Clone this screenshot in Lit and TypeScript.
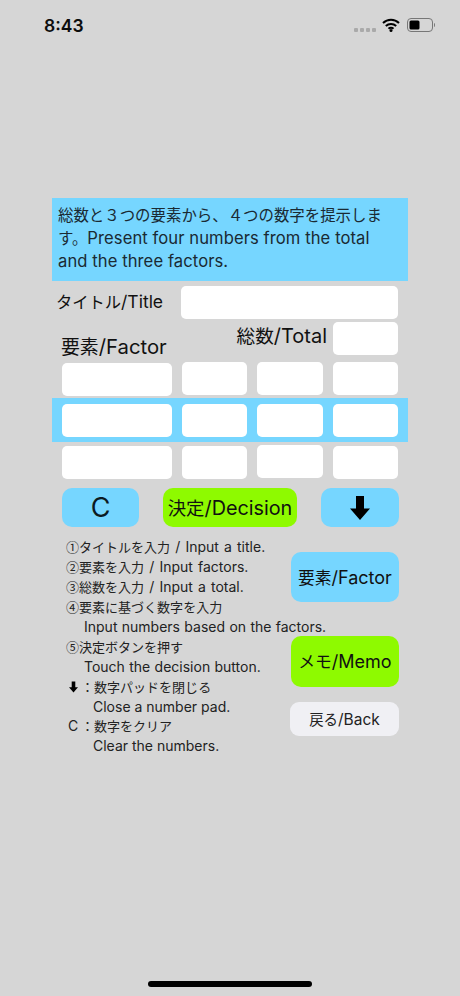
import { LitElement, html, css, svg } from "lit";
import { customElement } from "lit/decorators.js";

const arrow = svg`<path d="M6 0h8v12.500H20L10 24 0 12.500h6z" fill="#000"/>`;

/* Japanese runs sit a little smaller than the Latin ones, as in the reference. */
const t = (text: string) =>
  text
    .split(/([\u2460-\u2473\u3000-\u30ff\u4e00-\u9fff\uff00-\uffef]+)/)
    .filter(Boolean)
    .map((part) =>
      /^[\u2460-\u2473\u3000-\u30ff\u4e00-\u9fff\uff00-\uffef]/.test(part)
        ? html`<span class="j">${part}</span>`
        : part
    );

const jp = css`
  .j {
    font-family: "Noto Sans CJK JP", sans-serif;
    font-size: 0.93em;
    letter-spacing: 0;
    line-height: 1;
  }
`;

@customElement("app-root")
export class AppRoot extends LitElement {
  static styles = [
    jp,
    css`
      :host {
        display: block;
        width: 460px;
        height: 996px;
        background: #d6d6d6;
        color: #111;
        font-family: Inter, "Noto Sans CJK JP", sans-serif;
        position: relative;
        overflow: hidden;
      }
      .status {
        height: 50px;
        display: flex;
        align-items: center;
        padding: 0 25px 0 44px;
        box-sizing: border-box;
      }
      .time {
        font-size: 17.5px;
        font-weight: 600;
        flex: 1;
        color: #0c0c0c;
      }
      .dots {
        display: flex;
        gap: 2px;
        margin: 9px 6px 0 0;
      }
      .dots i {
        width: 4px;
        height: 4px;
        background: #aaa;
        border-radius: 1px;
      }
      .wifi {
        width: 18px;
        height: 14px;
        margin: 0 7px 0 0;
      }
      .battery {
        width: 28px;
        height: 14px;
      }
      .main {
        padding: 148px 52px 0;
      }
      .info {
        width: 356px;
        height: 83px;
        box-sizing: border-box;
        background: #76d6ff;
        padding: 6px 6px 0 6px;
        font-size: 16.6px;
        letter-spacing: 0.08px;
        line-height: 23px;
        color: #1a2a33;
      }
      .field {
        background: #fff;
        border-radius: 5px;
        height: 33px;
        box-sizing: border-box;
      }
      .title-row {
        display: flex;
        margin-top: 5px;
        padding: 0 10px 0 4px;
        height: 33px;
      }
      .title-row .label {
        font-size: 17.5px;
        line-height: 31px;
        width: 125px;
      }
      .title-row .field {
        flex: 1;
      }
      .total-row {
        display: flex;
        height: 33px;
        margin-top: 3px;
        padding: 0 10px 0 9px;
      }
      .factor-label {
        font-size: 20.3px;
        flex: 1;
        line-height: 23px;
        margin-top: 13px;
      }
      .total-label {
        font-size: 20px;
        line-height: 23px;
        margin: 3px 6px 0 0;
      }
      .total-row .field {
        width: 65px;
      }
      .grid {
        display: grid;
        grid-template-columns: 110px 65px 66px 65px;
        column-gap: 10px;
        padding: 0 10px;
        align-items: start;
      }
      .r1 {
        margin-top: 7px;
        height: 36px;
      }
      .r1 .first {
        margin-top: 1px;
      }
      .band {
        background: #76d6ff;
        height: 44px;
        padding-top: 6px;
        box-sizing: border-box;
      }
      .r3 {
        margin-top: 4px;
      }
      .r3 .third {
        margin-top: -1px;
      }
      .actions {
        display: flex;
        justify-content: space-between;
        margin-top: 9px;
        padding: 0 9px 0 10px;
      }
      .btn {
        display: flex;
        align-items: center;
        justify-content: center;
        border: 0;
        box-sizing: border-box;
        color: #111;
        font-family: inherit;
        padding: 0;
        white-space: nowrap;
      }
      .blue {
        background: #76d6ff;
      }
      .green {
        background: #8efa00;
      }
      .actions .btn {
        height: 39px;
        border-radius: 10px;
      }
      .c {
        width: 77px;
        font-size: 27px;
        color: #0c1a22;
      }
      .decision {
        width: 134px;
        font-size: 19.8px;
      }
      .down {
        width: 78px;
      }
      .down svg {
        width: 20px;
        height: 24px;
      }
      .lower {
        display: grid;
        margin-top: 10px;
        padding: 0 9px 0 14px;
      }
      .lower > * {
        grid-area: 1 / 1;
      }
      .steps {
        font-size: 14px;
        line-height: 20px;
        color: #222;
      }
      .steps div {
        white-space: nowrap;
        height: 19.95px;
      }
      .steps .sl {
        word-spacing: 1.2px;
      }
      .in1 {
        padding-left: 18px;
        word-spacing: 0.4px;
      }
      .in2 {
        padding-left: 27px;
      }
      .mini {
        display: inline-block;
        width: 9px;
        height: 12px;
        margin: 0 3px;
        vertical-align: -1px;
      }
      .cc {
        display: inline-block;
        width: 15px;
        padding-left: 2px;
        box-sizing: border-box;
      }
      .side {
        justify-self: end;
        display: flex;
        flex-direction: column;
        align-items: flex-end;
        padding-top: 15px;
      }
      .side .big {
        width: 108px;
        height: 50px;
        border-radius: 10px;
        font-size: 18px;
      }
      .side .green {
        height: 51px;
        margin-top: 34px;
      }
      .back {
        width: 109px;
        height: 34px;
        border-radius: 9px;
        background: #f0f0f4;
        font-size: 15.5px;
        color: #222;
        margin-top: 15px;
      }
      .home {
        position: absolute;
        left: 148px;
        top: 981px;
        width: 164px;
        height: 6px;
        border-radius: 3px;
        background: #000;
      }
    `,
  ];

  private row(cls: string) {
    return html`<div class="grid ${cls}">
      <div class="field first"></div>
      <div class="field"></div>
      <div class="field third"></div>
      <div class="field"></div>
    </div>`;
  }

  render() {
    return html`
      <div class="status">
        <span class="time">8:43</span>
        <span class="dots"><i></i><i></i><i></i><i></i></span>
        <svg class="wifi" viewBox="0 0 18 14">
          <path d="M1 5a11.500 11.500 0 0 1 16 0M3.800 8a7.500 7.500 0 0 1 10.400 0M6.500 10.800a3.500 3.500 0 0 1 5 0" fill="none" stroke="#000" stroke-width="2"/>
          <circle cx="9" cy="12.500" r="1.500" fill="#000"/>
        </svg>
        <svg class="battery" viewBox="0 0 28 14">
          <rect x="0.500" y="0.500" width="25" height="13" rx="3.500" fill="none" stroke="#777"/>
          <rect x="2.500" y="2.500" width="10" height="9" rx="1.500" fill="#000"/>
          <path d="M27 5v4c.8-.4 1-1.200 1-2s-.2-1.600-1-2z" fill="#777"/>
        </svg>
      </div>
      <div class="main">
        <div class="info">${t("総数と３つの要素から、４つの数字を提示しま")}<br />${t("す。")}Present four numbers from the total<br />and the three factors.</div>
        <div class="title-row">
          <span class="label">${t("タイトル/Title")}</span>
          <div class="field"></div>
        </div>
        <div class="total-row">
          <span class="factor-label">${t("要素/Factor")}</span>
          <span class="total-label">${t("総数/Total")}</span>
          <div class="field"></div>
        </div>
        ${this.row("r1")} ${this.row("band")} ${this.row("r3")}
        <div class="actions">
          <button class="btn blue c">C</button>
          <button class="btn green decision">${t("決定/Decision")}</button>
          <button class="btn blue down"><svg viewBox="0 0 20 24">${arrow}</svg></button>
        </div>
        <div class="lower">
          <div class="steps">
            <div class="sl">${t("①タイトルを入力 / Input a title.")}</div>
            <div class="sl">${t("②要素を入力 / Input factors.")}</div>
            <div class="sl">${t("③総数を入力 / Input a total.")}</div>
            <div>${t("④要素に基づく数字を入力")}</div>
            <div class="in1">Input numbers based on the factors.</div>
            <div>${t("⑤決定ボタンを押す")}</div>
            <div class="in1">Touch the decision button.</div>
            <div><svg class="mini" viewBox="0 0 20 24">${arrow}</svg>${t("：数字パッドを閉じる")}</div>
            <div class="in2">Close a number pad.</div>
            <div><span class="cc">C</span>${t("：数字をクリア")}</div>
            <div class="in2">Clear the numbers.</div>
          </div>
          <div class="side">
            <button class="btn blue big">${t("要素/Factor")}</button>
            <button class="btn green big">${t("メモ/Memo")}</button>
            <button class="btn back">${t("戻る/Back")}</button>
          </div>
        </div>
      </div>
      <div class="home"></div>
    `;
  }
}
